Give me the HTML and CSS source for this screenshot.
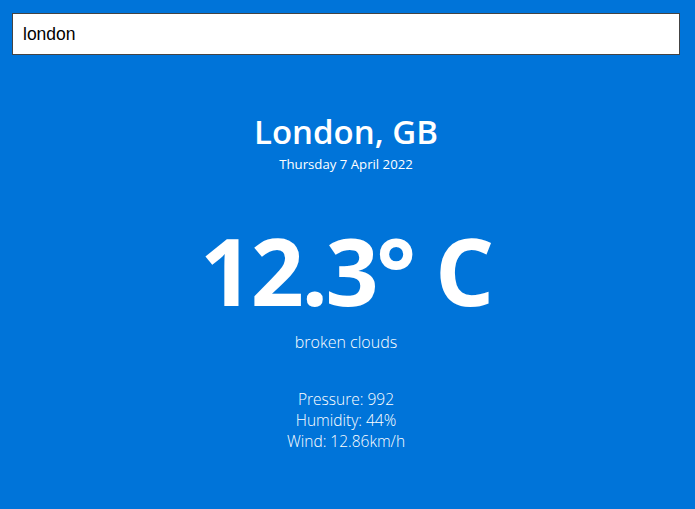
FILE: index.html
```html
<!DOCTYPE html>
<html lang="en">
<head>
<meta charset="utf-8">
<title>Weather</title>
<link rel="stylesheet" href="styles.css">
</head>
<body>
<div class="app">
  <div class="search-box">
    <input class="search-bar" type="text" value="london" spellcheck="true">
  </div>
  <div class="location-box">
    <div class="location">London, GB</div>
    <div class="date">Thursday 7 April 2022</div>
  </div>
  <div class="weather-box">
    <div class="temp">12.3° C</div>
    <div class="weather">broken clouds</div>
  </div>
  <div class="details">
    <div>Pressure: 992</div>
    <div>Humidity: 44%</div>
    <div>Wind: 12.86km/h</div>
  </div>
</div>
</body>
</html>
```
FILE: styles.css
```css
html, body {
  margin: 0;
  padding: 0;
  height: 100%;
}
body {
  background: #0074d9;
  font-family: "Open Sans", "Noto Sans", sans-serif;
  color: #fff;
}
.app {
  padding: 13px 15px 0 12px;
  display: flex;
  flex-direction: column;
  align-items: stretch;
}
.search-box {
  display: flex;
}
.search-bar {
  flex: 1;
  box-sizing: border-box;
  height: 42px;
  margin: 0;
  padding: 0 10px;
  border: 1px solid #444;
  background: #fff;
  font-family: "Liberation Sans", Arial, sans-serif;
  font-size: 17.5px;
  color: #000;
  outline: none;
}
.location-box {
  margin-top: 56px;
  text-align: center;
}
.location {
  font-size: 33px;
  font-weight: 600;
  line-height: 42px;
}
.date {
  margin-top: 2px;
  font-size: 13.2px;
  font-weight: 400;
  line-height: 18px;
}
.weather-box {
  margin-top: 42px;
  text-align: center;
}
.temp {
  font-size: 93px;
  font-weight: 700;
  letter-spacing: -2.5px;
  line-height: 110px;
}
.weather {
  margin-top: 6px;
  font-size: 16px;
  font-weight: 300;
  line-height: 22px;
}
.details {
  margin-top: 36px;
  text-align: center;
  font-size: 15.5px;
  font-weight: 300;
  line-height: 21px;
}
```
